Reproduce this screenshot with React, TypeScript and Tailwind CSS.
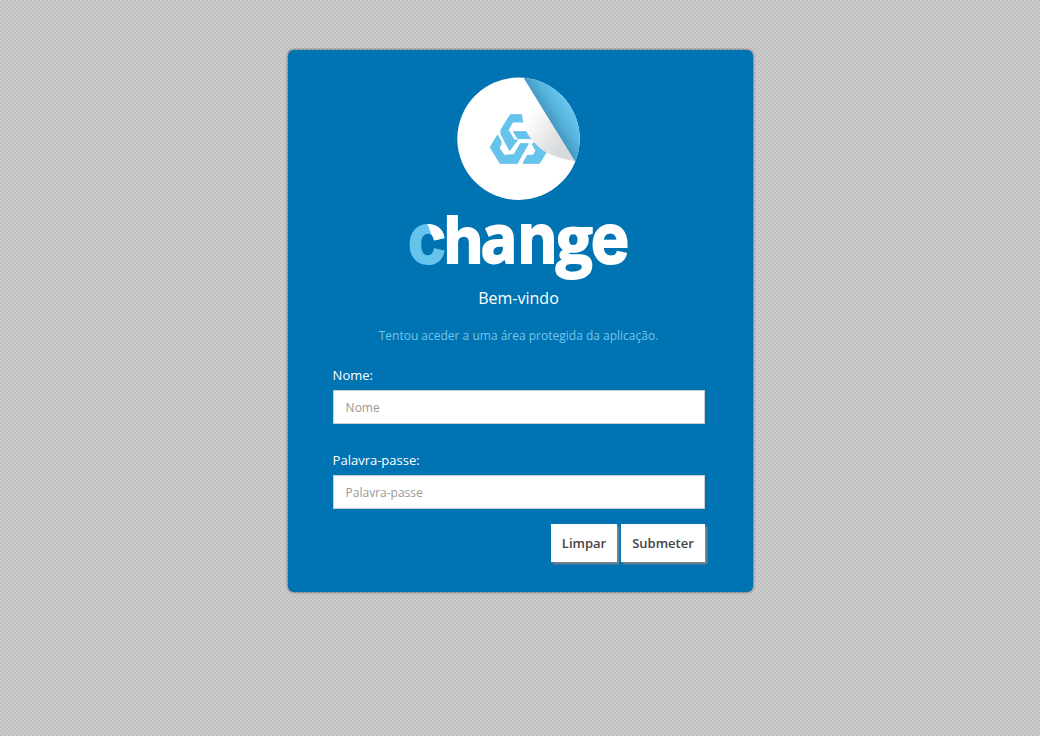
import React from 'react';

function Badge() {
  return (
    <svg className="block" width="465" height="160" viewBox="288 50 465 160" aria-hidden="true">
      <defs>
        <clipPath id="disc"><circle cx="518.5" cy="138.8" r="61.2" /></clipPath>
        <linearGradient id="curl" gradientUnits="userSpaceOnUse" x1="526" y1="120" x2="562" y2="145">
          <stop offset="0" stopColor="#ffffff" />
          <stop offset="0.45" stopColor="#eeeeef" />
          <stop offset="1" stopColor="#d9dadc" />
        </linearGradient>
        <linearGradient id="shade" gradientUnits="userSpaceOnUse" x1="549" y1="120" x2="568" y2="108">
          <stop offset="0" stopColor="#4598bf" />
          <stop offset="0.5" stopColor="#56b3db" />
          <stop offset="1" stopColor="#65c3ec" />
        </linearGradient>
      </defs>
      <circle cx="518.5" cy="138.8" r="61.2" fill="white" />
      <g transform="translate(440 65) scale(.33333)" fill="#65c3ec" stroke="#65c3ec" strokeWidth="3" strokeLinejoin="round">
        <path d="M211 149H252L257 171H218L205 195L222 225L232 225L209 257L183 208V194Z" />
        <path d="M221 200H266L282 221H233Z" />
        <path d="M173 210L152 244V249L180 295H232L265 236H241L222 269L193 271L178 250L184 231Z" />
        <path d="M249 295H298L325 252L285 232L277 237L288 258L279 271H262Z" />
      </g>
      <g clipPath="url(#disc)">
        <path d="M522.5 76L590 76V162H575.2Z" fill="url(#shade)" />
        <path d="M522.5 77.5L575 161.4C554 157 543 153 535 143C527 135 522 126 522 111Z" fill="url(#curl)" />
      </g>
    </svg>
  );
}

type Glyph = { letter: string; x: number; width: number; size: number; font: string };

const inter = 'Inter, sans-serif';
const openSans = "'Open Sans', sans-serif";

const letters: Glyph[] = [
  { letter: 'h', x: 444, width: 39, size: 64, font: inter },
  { letter: 'a', x: 480.5, width: 37, size: 68.5, font: openSans },
  { letter: 'n', x: 518, width: 39, size: 69, font: inter },
  { letter: 'g', x: 556, width: 36.5, size: 65, font: openSans },
  { letter: 'e', x: 591, width: 38, size: 68, font: inter },
];

function Wordmark() {
  return (
    <svg className="block" width="465" height="75" viewBox="288 210 465 75" role="img" aria-label="change">
      <defs>
        <clipPath id="tip"><path d="M424 215H450V237L434 241Z" /></clipPath>
      </defs>
      <g fontWeight="700" strokeWidth="2">
        <text x="408" y="263" fontFamily={inter} fontSize="68" textLength="38" lengthAdjust="spacingAndGlyphs" fill="#65c3ec" stroke="#65c3ec">c</text>
        <text x="408" y="263" fontFamily={inter} fontSize="68" textLength="38" lengthAdjust="spacingAndGlyphs" fill="white" stroke="white" clipPath="url(#tip)">c</text>
        {letters.map(({ letter, x, width, size, font }) => (
          <text key={letter} x={x} y="263" fontFamily={font} fontSize={size} textLength={width} lengthAdjust="spacingAndGlyphs" fill="white" stroke="white">{letter}</text>
        ))}
      </g>
    </svg>
  );
}

function Field({ label, type }: { label: string; type: string }) {
  return (
    <label className="block text-[13px] leading-5 text-white">
      {label}:
      <input
        type={type}
        placeholder={label}
        className="mt-[5px] block h-[34px] w-[372px] border border-[#ccc] bg-white px-3 text-xs text-[#555] outline-none placeholder:text-[#999]"
      />
    </label>
  );
}

const buttonClass = 'h-[38px] bg-white pt-[2px] text-[13px] font-semibold text-[#444] shadow-[2px_2px_2px_#888]';

export default function App() {
  return (
    <div className="min-h-screen bg-[#cdcdcd] pt-[50px] font-['Open_Sans',sans-serif] [background-size:4px_2px,4px_4px] [background-image:linear-gradient(transparent_50%,rgba(205,205,205,0.5)_0),conic-gradient(#b7b7b7_25%,#cfcfcf_0_50%,#b7b7b7_0_75%,#cfcfcf_0)]">
      <main className="ml-[288px] h-[542px] w-[465px] rounded-md bg-[#0073b2] shadow-[0_0_3px_#444]">
        <Badge />
        <Wordmark />
        <h1 className="mt-[1px] pr-1 text-center text-base leading-6 text-white">Bem-vindo</h1>
        <p className="mt-4 pr-1 text-center text-xs leading-5 text-[#73c6ea]">Tentou aceder a uma área protegida da aplicação.</p>
        <form className="mt-[19px] pr-[45px] pl-[44.6px]" onSubmit={(e) => e.preventDefault()}>
          <Field label="Nome" type="text" />
          <div className="h-[26px]" />
          <Field label="Palavra-passe" type="password" />
          <div className="mt-[15px] flex w-[372.4px] justify-end gap-1">
            <button type="reset" className={`${buttonClass} w-[66px]`}>Limpar</button>
            <button type="submit" className={`${buttonClass} w-[84px]`}>Submeter</button>
          </div>
        </form>
      </main>
    </div>
  );
}
